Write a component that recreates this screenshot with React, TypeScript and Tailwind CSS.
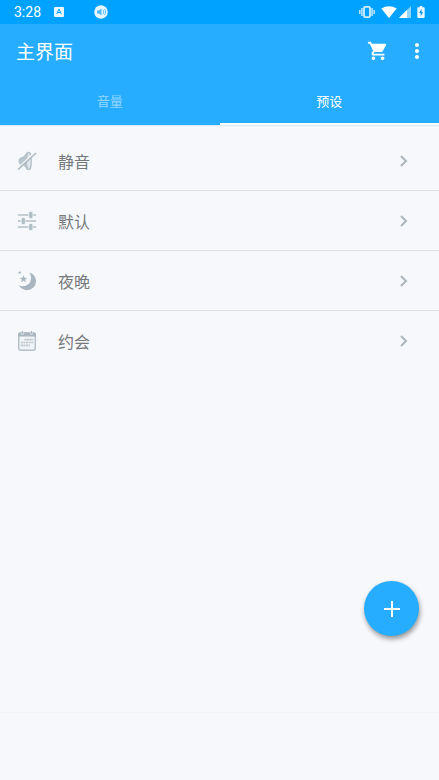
import React, { useState } from 'react';
import { MdShoppingCart, MdMoreVert } from 'react-icons/md';

function MuteIcon() {
  return (
    <svg viewBox="0 0 20 20" className="size-5" aria-hidden="true">
      <path d="M1.500 10c0-2.200 1.200-3.600 3.200-3.800C7 5.800 8 3.500 9.500 1.600c1-1 2.500-1 3 .2V18c-.8 1.500-2.300 1.300-3.200.2C8 15.800 7 14.200 4.700 14c-2 0-3.200-1.700-3.200-4z" fill="#b9c5cd" />
      <ellipse cx="11.800" cy="10" rx="2.500" ry="8.700" fill="#dfe5ea" stroke="#b4c0c8" strokeWidth="1.300" />
      <path d="M1 17 17.500 1.500" stroke="#f6f8fb" strokeWidth="1.500" />
      <path d="M1 18.700 19 2" stroke="#b0bcc4" strokeWidth="1.600" />
    </svg>
  );
}

function SlidersIcon() {
  return (
    <svg viewBox="0 0 20 20" className="size-5" aria-hidden="true">
      <path d="M1 4h18M1 10h18M1 16h18" stroke="#c3cdd3" strokeWidth="1.800" />
      <g fill="#b2bec6" stroke="#f6f8fb" strokeWidth=".7">
        <rect x="11.700" y=".4" width="4.200" height="7.200" rx="1.600" />
        <rect x="4.200" y="6.400" width="4.200" height="7.200" rx="1.600" />
        <rect x="11.700" y="12.400" width="4.200" height="7.200" rx="1.600" />
      </g>
    </svg>
  );
}

function MoonIcon() {
  return (
    <svg viewBox="0 0 20 20" className="size-5" fill="#a9b6bf" aria-hidden="true">
      <path d="M12.500 1.500c4 1.300 6.500 4.500 6.500 8.700a9 9 0 0 1-9 9c-3.500 0-6.700-2-8.200-4.900 2.200 1.200 5.700 1.300 8.400-.3 4.200-2.500 5-8 2.300-12.500z" />
      <path d="m6.500 4.200 1 2.500 2.700.2-2.100 1.700.7 2.600-2.300-1.400-2.300 1.400.7-2.600-2.100-1.700 2.700-.2z" />
      <circle cx="2.700" cy="1.600" r="1.200" />
    </svg>
  );
}

function CalendarIcon() {
  return (
    <svg viewBox="0 0 20 20" className="size-5" aria-hidden="true">
      <rect x="1.700" y="2" width="16.600" height="17.300" rx="2" fill="#f1f4f6" stroke="#b3bfc7" strokeWidth="1.400" />
      <path d="M1 5.500V3.400a2 2 0 0 1 2-2h14a2 2 0 0 1 2 2v2.100z" fill="#a9b6bf" />
      <path d="M5.500 1.400v2.100M14.500 1.400v2.100" stroke="#f6f8fb" strokeWidth="2.400" />
      <path d="M5.500 0v3M14.500 0v3" stroke="#a9b6bf" strokeWidth="1.300" />
      <path d="M7.500 8.700h8.700M3.900 11.500h12.300M3.900 14.300h9" stroke="#bac5cc" strokeWidth="1.700" strokeDasharray="2 .6" />
    </svg>
  );
}

function Chevron() {
  return (
    <svg viewBox="0 0 8 12" className="h-3 w-2" fill="none" stroke="#adb6bc" strokeWidth="2" aria-hidden="true">
      <path d="m1 1 5 5-5 5" />
    </svg>
  );
}

function StatusBar() {
  return (
    <div className="flex h-6 items-center bg-[#00a2ff] pr-3.5 pl-3.5 text-white">
      <span className="w-10 font-['Roboto',sans-serif] text-sm">3:28</span>
      <svg viewBox="0 0 10 10" className="size-2.5" aria-hidden="true">
        <rect width="10" height="10" rx="1" fill="#e8f6ff" />
        <path d="m2.700 7 2.300-5 2.300 5M3.500 5.500h3" fill="none" stroke="#00a2ff" strokeWidth="1" />
      </svg>
      <svg viewBox="0 0 14 14" className="ml-7.5 size-3.5" aria-hidden="true">
        <circle cx="7" cy="7" r="6.800" fill="#e8f6ff" />
        <path d="M3 5.500h2L7.500 3.500v7L5 8.500H3z" fill="#4db9f5" />
        <path d="M9 4.800c1 1.200 1 3.200 0 4.400M10.500 4c1.500 1.700 1.500 4.300 0 6" fill="none" stroke="#4db9f5" strokeWidth=".9" />
      </svg>
      <div className="ml-auto flex items-center">
        <svg viewBox="0 0 16 12" className="h-3 w-4" fill="none" stroke="#b5e3ff" strokeWidth="1.600" aria-hidden="true">
          <rect x="5" y=".9" width="6" height="10.200" rx="1" stroke="#d3efff" strokeWidth="1.800" />
          <path d="M2.900 2v8M13.100 2v8M.8 4v4M15.200 4v4" />
        </svg>
        <svg viewBox="0 0 16 12" className="ml-1.5 h-3 w-4" fill="#fff" aria-hidden="true">
          <path d="M8 12 .3 2.600C4.500-.7 11.500-.7 15.700 2.600z" />
        </svg>
        <svg viewBox="0 0 12 12" className="ml-0.5 size-3" aria-hidden="true">
          <path d="M0 12 12 0v12z" fill="#8fd4ff" />
          <path d="M0 12 8 4v8z" fill="#fff" />
        </svg>
        <svg viewBox="0 0 8 13" className="ml-1.5 h-3 w-2" aria-hidden="true">
          <path d="M1 1.300h1.700V0h2.600v1.300H7a1 1 0 0 1 1 1V12a1 1 0 0 1-1 1H1a1 1 0 0 1-1-1V2.300a1 1 0 0 1 1-1z" fill="#e8f6ff" />
          <path d="M4.600 3 2 7.600h1.700V11.300L6.200 6.600H4.600z" fill="#0594e8" />
        </svg>
      </div>
    </div>
  );
}

const tabs = ['音量', '预设'];

const presets = [
  { name: '静音', icon: <MuteIcon /> },
  { name: '默认', icon: <SlidersIcon /> },
  { name: '夜晚', icon: <MoonIcon /> },
  { name: '约会', icon: <CalendarIcon /> },
];

function App() {
  const [activeTab, setActiveTab] = useState('预设');

  return (
    <div className="flex min-h-screen flex-col bg-[#f6f8fb] font-['Noto_Sans_CJK_SC',sans-serif]">
      <StatusBar />
      <header className="border-b border-[#d5e9f7] bg-[#26adff] text-white">
        <div className="flex h-[54px] items-center pr-2.5 pl-4">
          <h1 className="text-[19px] leading-6">主界面</h1>
          <button type="button" aria-label="购物车" className="ml-auto">
            <MdShoppingCart className="size-[22px]" />
          </button>
          <button type="button" aria-label="更多" className="ml-4">
            <MdMoreVert className="size-6" />
          </button>
        </div>
        <div className="flex h-[47px]" role="tablist">
          {tabs.map((tab) => (
            <button
              key={tab}
              type="button"
              role="tab"
              aria-selected={activeTab === tab}
              onClick={() => setActiveTab(tab)}
              className={
                activeTab === tab
                  ? 'flex-1 border-b-2 border-white text-[13px] text-white'
                  : 'flex-1 border-b-2 border-transparent text-[13px] text-white/50'
              }
            >
              {tab}
            </button>
          ))}
        </div>
      </header>
      <main className="flex flex-1 flex-col pt-[5px]">
        <ul className="divide-y divide-[#dde1e5]">
          {presets.map((preset) => (
            <li key={preset.name}>
              <button type="button" className="flex h-[59px] w-full items-center pr-[31px] pl-[17px]">
                {preset.icon}
                <span className="ml-[21px] text-base text-[#76797b]">{preset.name}</span>
                <span className="ml-auto">
                  <Chevron />
                </span>
              </button>
            </li>
          ))}
        </ul>
        <button
          type="button"
          aria-label="添加"
          className="mt-auto mr-5 mb-[76px] flex size-[55px] items-center justify-center self-end rounded-full bg-[#26adff] shadow-[1px_3px_5px_rgba(0,0,0,0.4)]"
        >
          <svg viewBox="0 0 16 16" className="size-4" stroke="#fff" strokeWidth="2" aria-hidden="true">
            <path d="M8 0v16M0 8h16" />
          </svg>
        </button>
      </main>
      <footer className="h-[68px] border-t border-[#f1f3f6]" />
    </div>
  );
}

export default App;
